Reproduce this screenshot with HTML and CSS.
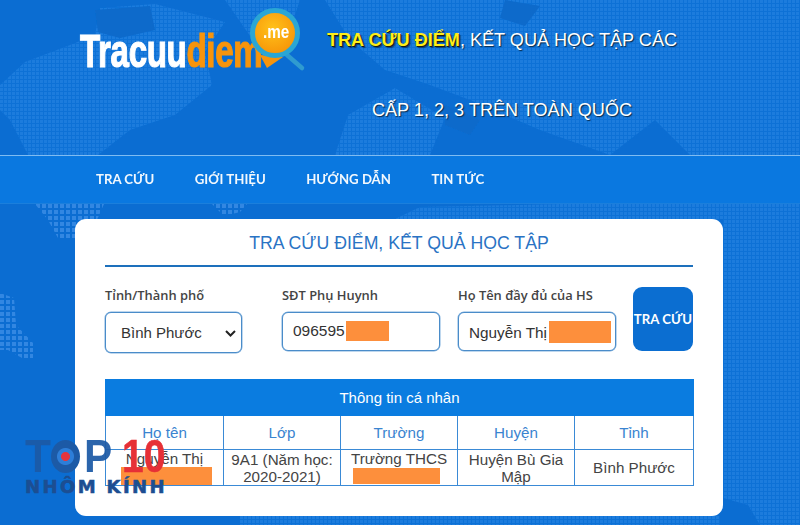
FILE: index.html
```html
<!DOCTYPE html>
<html lang="vi">
<head>
<meta charset="utf-8">
<title>Tra cứu điểm</title>
<link rel="stylesheet" href="styles.css">
</head>
<body>
<div class="page">
  <svg class="map" width="800" height="525" viewBox="0 0 800 525" aria-hidden="true">
    <defs>
      <pattern id="dots" width="4" height="4" patternUnits="userSpaceOnUse">
        <rect width="4" height="4" fill="#1071d6"/>
        <rect width="3" height="3" fill="#1a7bdd"/>
      </pattern>
      <pattern id="light" width="6" height="6" patternUnits="userSpaceOnUse">
        <rect width="4" height="4" fill="#3387e2"/>
      </pattern>
      <filter id="soft" x="-5%" y="-5%" width="110%" height="110%">
        <feGaussianBlur stdDeviation=".6"/>
      </filter>
    </defs>
    <g filter="url(#soft)">
      <path d="M0 85 L25 62 L70 45 L95 35 L100 8 L155 4 L225 22 L205 52 L212 85 L175 115 L130 130 L98 155 L28 155 L10 120 L0 110 Z" fill="url(#dots)"/>
      <path d="M95 10 L150 6 L155 30 L120 38 L98 32 Z" fill="#0c6acb"/>
      <path d="M225 0 L300 0 L290 30 L250 36 Z" fill="url(#dots)"/>
      <path d="M325 0 L800 0 L800 155 L690 155 L655 120 L610 155 L540 130 L470 100 L430 85 L385 70 L350 40 Z" fill="url(#dots)"/>
      <path d="M335 155 L348 115 L395 88 L445 118 L430 155 Z" fill="url(#dots)"/>
      <path d="M445 105 L480 120 L470 135 L445 125 Z" fill="#0c6acb"/>
      <path d="M505 0 L540 6 L525 26 L500 18 Z" fill="#0c6acb"/>
      <path d="M35 204 L104 204 L96 222 L78 240 L58 238 L48 220 Z" fill="url(#light)"/>
      <path d="M212 204 L247 204 L240 212 L224 216 Z" fill="url(#light)"/>
      <path d="M395 219 L420 207 L560 204 L723 204 L723 219 Z" fill="url(#dots)"/>
      <path d="M0 293 L14 298 L16 325 L33 343 L33 358 L22 358 L8 350 L0 350 Z" fill="url(#light)"/>
      <path d="M723 204 L800 204 L800 525 L760 525 L748 505 L723 498 Z" fill="url(#dots)"/>
      <path d="M240 516 L720 516 L720 525 L240 525 Z" fill="url(#dots)"/>
    </g>
  </svg>

  <header class="top">
    <div class="logo">
      <span class="logo-word"><span class="w">Tracuu</span><span class="o">diem</span></span>
      <svg class="lens" width="64" height="70" viewBox="0 0 64 70" aria-hidden="true">
        <defs>
          <radialGradient id="sun" cx=".45" cy=".4" r=".6">
            <stop offset="0" stop-color="#ffc21a"/>
            <stop offset="1" stop-color="#f79408"/>
          </radialGradient>
        </defs>
        <path d="M12 49 L19 62 L35 51 Z" fill="#f7940c"/>
        <path d="M39 49 L54 62" stroke="#2f9bd0" stroke-width="4.5" stroke-linecap="round"/>
        <circle cx="27" cy="27" r="22.5" fill="url(#sun)" stroke="#2aa6d4" stroke-width="5"/>
      </svg>
      <span class="me">.me</span>
    </div>
    <h1 class="slogan"><strong>TRA CỨU ĐIỂM</strong>, KẾT QUẢ HỌC TẬP CÁC CẤP 1, 2, 3 TRÊN TOÀN QUỐC</h1>
  </header>

  <nav class="menu">
    <a>TRA CỨU</a>
    <a>GIỚI THIỆU</a>
    <a>HƯỚNG DẪN</a>
    <a>TIN TỨC</a>
  </nav>

  <main class="card">
    <h2 class="title">TRA CỨU ĐIỂM, KẾT QUẢ HỌC TẬP</h2>
    <form class="form">
      <div class="field f-city">
        <span class="label">Tỉnh/Thành phố</span>
        <div class="box box-select">Bình Phước
          <svg class="chev" width="11" height="7" viewBox="0 0 11 7" aria-hidden="true"><path d="M1 1 L5.5 5.5 L10 1" fill="none" stroke="#222" stroke-width="2"/></svg>
        </div>
      </div>
      <div class="field f-phone">
        <span class="label">SĐT Phụ Huynh</span>
        <div class="box box-phone">096595<span class="mask mask-phone"></span></div>
      </div>
      <div class="field f-name">
        <span class="label">Họ Tên đầy đủ của HS</span>
        <div class="box box-name">Nguyễn Thị<span class="mask mask-name"></span></div>
      </div>
      <div class="btn">TRA CỨU</div>
    </form>

    <table class="info">
      <colgroup><col class="c1"><col class="c2"><col class="c3"><col class="c4"><col class="c5"></colgroup>
      <thead>
        <tr class="r-head"><th colspan="5">Thông tin cá nhân</th></tr>
        <tr class="r-cols"><th>Họ tên</th><th>Lớp</th><th>Trường</th><th>Huyện</th><th>Tỉnh</th></tr>
      </thead>
      <tbody>
        <tr class="r-data">
          <td><div class="clip">Nguyễn Thị<span class="mask mask-cell1"></span></div></td>
          <td>9A1 (Năm học: 2020-2021)</td>
          <td><div class="clip">Trường THCS<span class="mask mask-cell3"></span></div></td>
          <td>Huyện Bù Gia Mập</td>
          <td>Bình Phước</td>
        </tr>
      </tbody>
    </table>
  </main>

  <div class="stamp">
    <div class="stamp-top"><span class="t">T</span><span class="ring"></span><span class="t tp">P</span><span class="ten">10</span></div>
    <div class="stamp-sub">NHÔM KÍNH</div>
  </div>
</div>
</body>
</html>
```

FILE: styles.css
```css
* { box-sizing: border-box; }
html, body { margin: 0; padding: 0; }
body {
  width: 800px;
  height: 525px;
  overflow: hidden;
  font-family: "Liberation Sans", Arial, sans-serif;
  background: #0b6dd2;
}
.page { position: relative; width: 800px; height: 525px; overflow: hidden; }
.map { position: absolute; left: 0; top: 0; }

.top {
  position: relative;
  height: 155px;
  display: flex;
  padding-left: 79px;
}
.logo { position: relative; width: 242px; height: 155px; flex: none; }
.logo-word {
  position: absolute;
  left: 1px;
  top: 26px;
  font-size: 46px;
  line-height: 50px;
  font-weight: 700;
  letter-spacing: -.5px;
  white-space: nowrap;
  -webkit-text-stroke: 1.2px currentColor;
  transform: scaleX(.72);
  transform-origin: left top;
}
.w { color: #fff; }
.o { color: #f7940c; }
.lens { position: absolute; left: 169px; top: 6px; }
.me {
  position: absolute;
  left: 184px;
  top: 22px;
  color: #fff;
  font-size: 18px;
  line-height: 20px;
  font-weight: 700;
  transform: scaleX(.85);
  transform-origin: left top;
}
.slogan {
  width: 362px;
  margin: 5px 0 0;
  font-size: 18.1px;
  line-height: 70px;
  font-weight: 400;
  text-align: center;
  color: #fff;
  text-shadow: 1px 1px 1px #0a2a48;
}
.slogan strong {
  color: #ffee1a;
  font-weight: 700;
  text-shadow: 1px 1px 0 #1c1c0a, 2px 2px 1px rgba(0, 0, 0, .45);
}

.menu {
  position: relative;
  height: 49px;
  display: flex;
  gap: 40.5px;
  align-items: center;
  padding: 0 0 2px 96px;
  background: #0a78e0;
  border-top: 1px solid #7fbcf2;
  border-bottom: 1px solid #1b7fdc;
}
.menu a {
  color: #fff;
  font-family: Lato, sans-serif;
  font-size: 13.2px;
  font-weight: 700;
  opacity: .95;
}

.card {
  position: relative;
  width: 648px;
  height: 297px;
  margin: 15px 0 0 75px;
  padding: 0 30px;
  background: #fff;
  border-radius: 11px;
}
.title {
  height: 48px;
  margin: 0;
  font-size: 17.7px;
  line-height: 49px;
  font-weight: 400;
  text-align: center;
  color: #2a73c4;
  border-bottom: 2px solid #1d70bc;
}
.form {
  display: flex;
  align-items: flex-start;
  height: 112px;
  padding-top: 20px;
}
.field { display: flex; flex-direction: column; flex: none; }
.f-city { width: 137px; margin-right: 40px; }
.f-phone { width: 158px; margin-right: 18px; }
.f-name { width: 158px; margin-right: 17px; }
.label {
  display: block;
  height: 25px;
  font-family: "Open Sans", sans-serif;
  font-size: 12.9px;
  line-height: 16px;
  font-weight: 600;
  color: #444;
  white-space: nowrap;
}
.box {
  position: relative;
  display: flex;
  align-items: center;
  height: 39px;
  padding: 0 10px;
  border: 1px solid #4a8cc9;
  border-radius: 6px;
  background: #fff;
  font-size: 15.5px;
  color: #333;
  white-space: nowrap;
  box-shadow: 0 0 0 .5px #7fb0de;
}
.box-select { height: 41px; padding-left: 15px; font-size: 15px; }
.box-phone { padding-bottom: 1px; }
.box-name { font-size: 15.3px; padding: 3px 4px 0 10px; justify-content: space-between; }
.chev { position: absolute; right: 5px; top: 17px; }
.mask { display: block; background: #fd8f3c; flex: none; }
.mask-phone { width: 43px; height: 20px; margin-left: 1px; }
.mask-name { width: 62px; height: 22px; margin: -3px 0 0 0; }
.btn {
  flex: none;
  width: 60px;
  height: 64px;
  display: flex;
  align-items: center;
  justify-content: center;
  background: #0b6ed1;
  border-radius: 9px;
  color: #fff;
  font-family: Lato, sans-serif;
  font-size: 13.2px;
  font-weight: 700;
  white-space: nowrap;
  overflow: hidden;
}

.info {
  width: 588px;
  height: 106px;
  table-layout: fixed;
  border-collapse: collapse;
  font-size: 15.2px;
}
.c1 { width: 118px; }
.c2, .c3, .c4 { width: 117px; }
.c5 { width: 119px; }
.info th, .info td { border: 1px solid #3a8ad6; padding: 0; text-align: center; font-weight: 400; }
.r-head { height: 36px; }
.r-head th { background: #0a7ce0; color: #fff; font-size: 15px; border-color: #0a7ce0; }
.r-cols { height: 34px; }
.r-cols th { color: #3a84d0; }
.r-data { height: 36px; }
.r-data td { color: #444; line-height: 17px; vertical-align: middle; }
.clip { height: 35px; overflow: hidden; }
.mask-cell1 { width: 91px; height: 18px; margin: 0 0 0 15px; }
.mask-cell3 { width: 87px; height: 16px; margin: 1px 0 0 12px; }

.stamp {
  position: absolute;
  left: 25px;
  top: 438px;
  width: 150px;
  height: 62px;
}
.stamp-top { display: flex; align-items: center; height: 36px; }
.t {
  width: 26px;
  font-size: 46px;
  line-height: 36px;
  font-weight: 700;
  color: #1c5aa6;
  opacity: .93;
  transform: scaleX(.92);
  transform-origin: left center;
}
.ring {
  width: 29px;
  height: 33px;
  margin-right: 4px;
  flex: none;
  border-radius: 50%;
  background: radial-gradient(circle, #e5343c 0 4px, #2d7ed8 5px 8px, #1c5aa6 9px);
}
.tp { width: 38px; }
.ten {
  font-size: 46px;
  line-height: 36px;
  font-weight: 700;
  color: #e63036;
  white-space: nowrap;
  -webkit-text-stroke: .5px #e63036;
  transform: scaleX(.85);
  transform-origin: left center;
}
.stamp-sub {
  margin-top: 3px;
  font-family: "DejaVu Sans", sans-serif;
  font-size: 18px;
  line-height: 20px;
  font-weight: 700;
  color: #1c4e92;
  letter-spacing: 2.4px;
  white-space: nowrap;
  -webkit-text-stroke: .6px #1c4e92;
}
```
